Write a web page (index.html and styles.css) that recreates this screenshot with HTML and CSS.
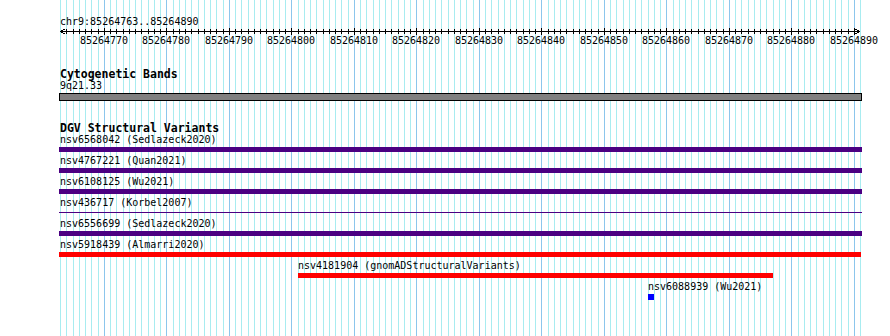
FILE: index.html
```html
<!DOCTYPE html>
<html lang="en">
<head>
    <title>chr9:85264763..85264890</title>
    <link rel="stylesheet" href="styles.css">
</head>
<body>
    <div class="genome">
        <div class="gridlines" id="gridlines"></div>
        <div class="tracks">
            <div class="ruler">
                <div class="locus">chr9:85264763..85264890</div>
                <svg class="axis" id="axis" width="802" height="7">
                    <line x1="0" y1="3.5" x2="800" y2="3.5" />
                    <path d="M5.5 0.5 L0.5 3.5 L5.5 6.5" />
                    <path d="M794.5 0.5 L799.5 3.5 L794.5 6.5" />
                </svg>
                <div class="ruler-labels" id="rulerLabels"></div>
            </div>

            <div class="track">
                <h3 class="track-title">Cytogenetic Bands</h3>
                <div class="feature-label">9q21.33</div>
                <div class="band"></div>
            </div>

            <div class="track">
                <h3 class="track-title">DGV Structural Variants</h3>
                <div class="feature">
                    <div class="feature-label">nsv6568042 (Sedlazeck2020)</div>
                    <div class="bar clipped loss" style="width:803px"></div>
                </div>
                <div class="feature">
                    <div class="feature-label">nsv4767221 (Quan2021)</div>
                    <div class="bar clipped loss" style="width:803px"></div>
                </div>
                <div class="feature">
                    <div class="feature-label">nsv6108125 (Wu2021)</div>
                    <div class="bar clipped loss" style="width:803px"></div>
                </div>
                <div class="feature">
                    <div class="feature-label">nsv436717 (Korbel2007)</div>
                    <div class="bar clipped loss thin" style="width:803px"></div>
                </div>
                <div class="feature">
                    <div class="feature-label">nsv6556699 (Sedlazeck2020)</div>
                    <div class="bar clipped loss" style="width:803px"></div>
                </div>
                <div class="feature">
                    <div class="feature-label">nsv5918439 (Almarri2020)</div>
                    <div class="bar clipped gain" style="width:802px"></div>
                </div>
                <div class="feature" style="margin-left:238px">
                    <div class="feature-label">nsv4181904 (gnomADStructuralVariants)</div>
                    <div class="bar gain" style="width:475px"></div>
                </div>
                <div class="feature" style="margin-left:588px">
                    <div class="feature-label">nsv6088939 (Wu2021)</div>
                    <div class="bar small" style="width:6px"></div>
                </div>
            </div>
        </div>
    </div>
    <script src="script.js"></script>
</body>
</html>
```

FILE: styles.css
```css
body {
margin: 0;
background-color: #fff;
font-family: "DejaVu Sans Mono", "Liberation Mono", monospace;
font-size: 10px;
color: #000;
}

.genome {
position: relative;
height: 336px;
overflow: hidden;
}

/* grid behind all the tracks, one line per base */
.gridlines {
position: absolute;
top: 0;
bottom: 0;
left: 60px;
width: 801px;
}

.gridline {
position: absolute;
top: 0;
bottom: 0;
width: 1px;
background-color: #a8ecf0;
}

.gridline.major {
background-color: #8cc6ec;
}

.tracks {
position: relative;
width: 800px;
margin-left: 60px;
padding-top: 16px;
}

.locus {
height: 12px;
line-height: 12px;
}

.axis {
display: block;
overflow: visible;
}

.axis line,
.axis path {
stroke: #000;
stroke-width: 1;
fill: none;
shape-rendering: crispEdges;
}

.ruler-labels {
position: relative;
height: 12px;
line-height: 12px;
}

.ruler-label {
position: absolute;
top: 0;
transform: translateX(-50%);
white-space: nowrap;
}

.track {
margin-top: 21px;
}

.track-title {
margin: 0;
font-size: 11.5px;
font-weight: bold;
line-height: 12px;
height: 12px;
white-space: nowrap;
}

.feature-label {
height: 12px;
line-height: 12px;
white-space: nowrap;
}

.band {
margin: 1px 0 0 -1px;
width: 801px;
height: 6px;
border: 1px solid #000;
background-color: #808080;
}

.bar {
height: 5px;
margin: 1px 0 3px;
}

.bar.clipped {
margin-left: -1px;
}

.bar.loss {
background-color: #4b0082;
}

.bar.gain {
background-color: #ff0000;
}

.bar.thin {
height: 1px;
margin-top: 3px;
margin-bottom: 5px;
}

.bar.small {
height: 6px;
margin-bottom: 2px;
background-color: #0000ff;
}
```

FILE: script.js
```js
const START = 85264763;
const END = 85264890;
const PX_PER_BP = 6.25;

function xFor(base) {
    return Math.round((base - START) * PX_PER_BP);
}

const grid = document.getElementById('gridlines');
const axis = document.getElementById('axis');
const rulerLabels = document.getElementById('rulerLabels');

for (let base = START; base <= END + 1; base++) {
    const x = xFor(base);
    const major = base % 10 === 0;

    const line = document.createElement('div');
    line.className = major ? 'gridline major' : 'gridline';
    line.style.left = x + 'px';
    grid.appendChild(line);

    if (base === START || base === END + 1) continue;

    const tick = document.createElementNS('http://www.w3.org/2000/svg', 'line');
    tick.setAttribute('x1', x + 0.5);
    tick.setAttribute('x2', x + 0.5);
    tick.setAttribute('y1', major ? 0 : 1);
    tick.setAttribute('y2', major ? 7 : 6);
    axis.appendChild(tick);

    if (major) {
        const label = document.createElement('span');
        label.className = 'ruler-label';
        label.style.left = x + 'px';
        label.textContent = base;
        rulerLabels.appendChild(label);
    }
}
```
